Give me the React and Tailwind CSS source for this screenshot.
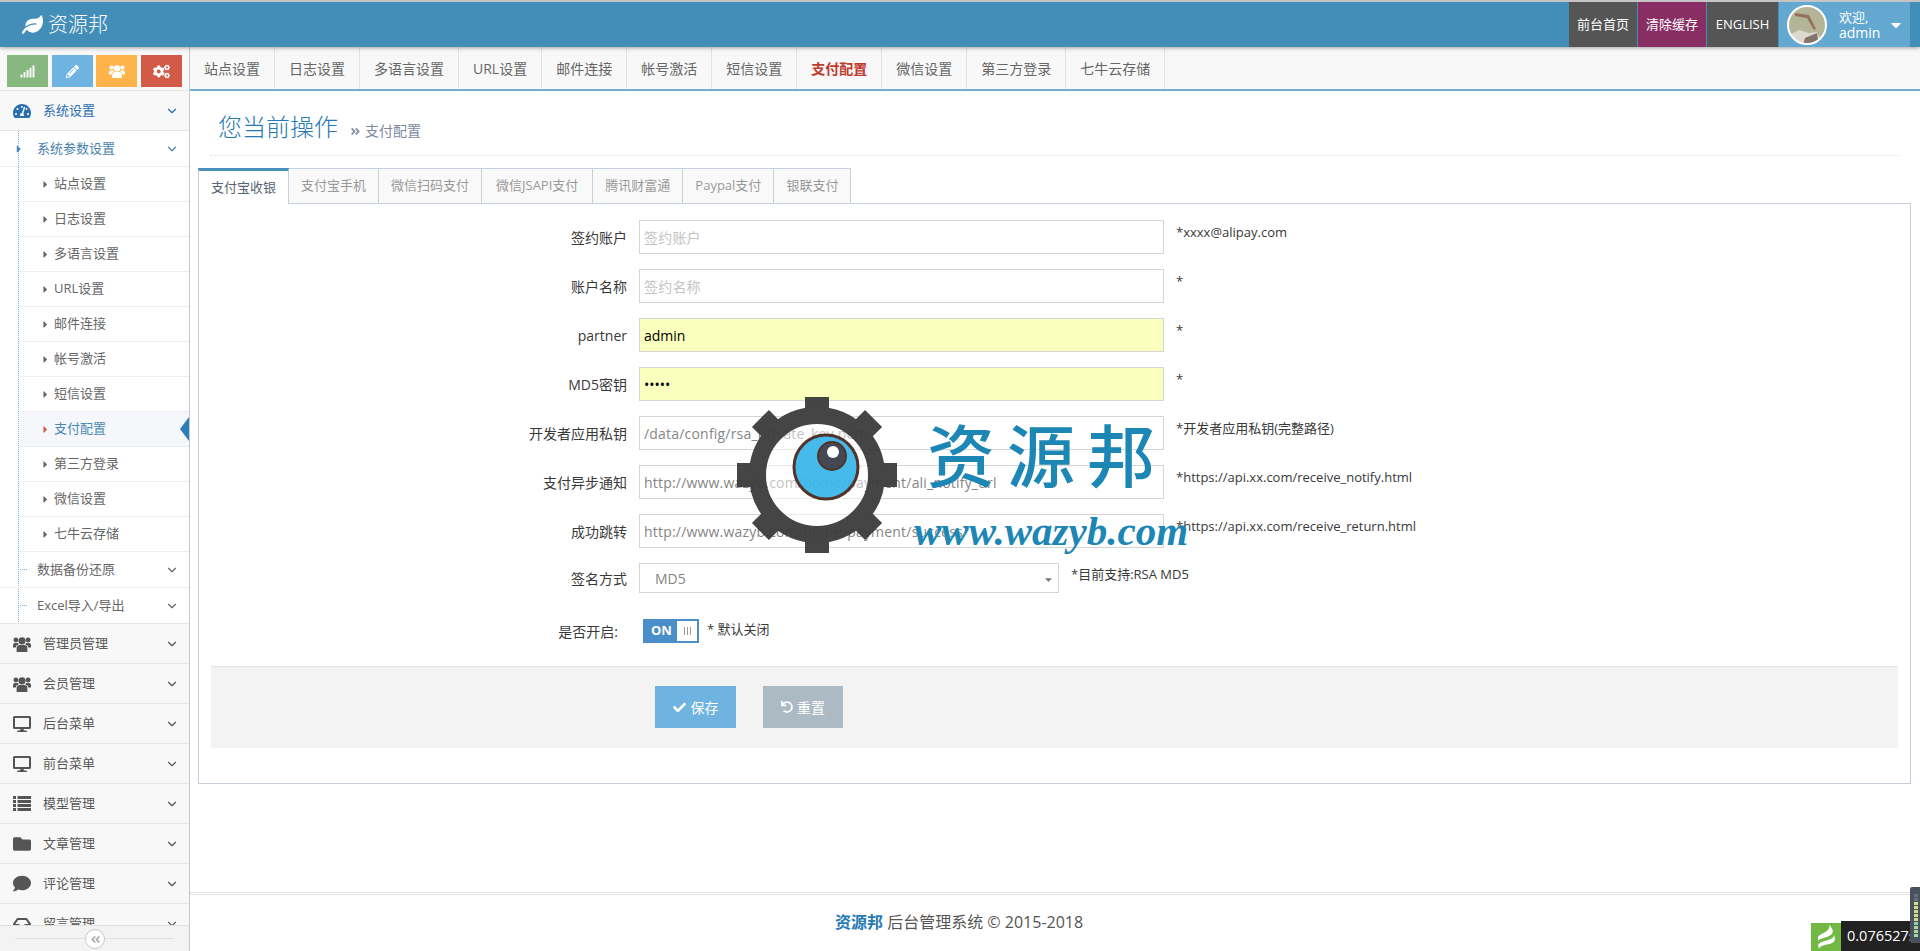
import { ChevronDown } from "lucide-react";
import {
  FaAngleDoubleLeft,
  FaAngleDoubleRight,
  FaCaretDown,
  FaCaretRight,
  FaCheck,
  FaCogs,
  FaComment,
  FaDesktop,
  FaFolder,
  FaInbox,
  FaLeaf,
  FaPencilAlt,
  FaSignal,
  FaTachometerAlt,
  FaUndo,
} from "react-icons/fa";

// font-awesome 4 look, the packaged FaUsers / FaList are too flat
const UsersIcon = ({ size = 20, className }) => (
  <svg width={size} height={(size * 18) / 20} viewBox="0 0 20 18" fill="currentColor" className={className}>
    <circle cx="10" cy="5.5" r="4" />
    <circle cx="3.2" cy="4.5" r="2.7" />
    <circle cx="16.8" cy="4.5" r="2.7" />
    <path d="M4 18 V13.5 Q4 10 7.5 10 H12.5 Q16 10 16 13.5 V18Z" />
    <path d="M0 13 V10 Q0 8 2.5 8 H5.5 Q6 9 6.5 9.3 Q3 10.5 3 13Z" />
    <path d="M20 13 V10 Q20 8 17.5 8 H14.5 Q14 9 13.5 9.3 Q17 10.5 17 13Z" />
  </svg>
);

const ListIcon = ({ className }) => (
  <svg width="18" height="15" viewBox="0 0 18 15" fill="currentColor" className={className}>
    {[0, 4, 8, 12].map((y) => (
      <g key={y}>
        <rect x="0" y={y} width="3" height="3" />
        <rect x="4.5" y={y} width="13.5" height="3" />
      </g>
    ))}
  </svg>
);

const subItems = ["站点设置", "日志设置", "多语言设置", "URL设置", "邮件连接", "帐号激活", "短信设置", "支付配置", "第三方登录", "微信设置", "七牛云存储"];
const menus = [
  ["管理员管理", <UsersIcon />],
  ["会员管理", <UsersIcon />],
  ["后台菜单", <FaDesktop size={20} />],
  ["前台菜单", <FaDesktop size={20} />],
  ["模型管理", <ListIcon />],
  ["文章管理", <FaFolder size={18} />],
  ["评论管理", <FaComment size={19} />],
  ["留言管理", <FaInbox size={18} />],
];
const navTabs = ["站点设置", "日志设置", "多语言设置", "URL设置", "邮件连接", "帐号激活", "短信设置", "支付配置", "微信设置", "第三方登录", "七牛云存储"];
const payTabs = ["支付宝收银", "支付宝手机", "微信扫码支付", "微信JSAPI支付", "腾讯财富通", "Paypal支付", "银联支付"];
const fields = [
  { label: "签约账户", placeholder: "签约账户", hint: "*xxxx@alipay.com" },
  { label: "账户名称", placeholder: "签约名称", hint: "*" },
  { label: "partner", value: "admin", hint: "*", filled: true },
  { label: "MD5密钥", value: "admin", type: "password", hint: "*", filled: true },
  { label: "开发者应用私钥", value: "/data/config/rsa_private_key.pem", hint: "*开发者应用私钥(完整路径)" },
  { label: "支付异步通知", value: "http://www.wazyb.com/home/payment/ali_notify_url", hint: "*https://api.xx.com/receive_notify.html" },
  { label: "成功跳转", value: "http://www.wazyb.com/home/payment/success", hint: "*https://api.xx.com/receive_return.html" },
];

const Header = () => (
  <div className="relative z-10 flex h-[47px] shrink-0 items-stretch justify-between border-t-2 border-[#c4c4c4] bg-[#438eb9] shadow-[0_1px_4px_rgba(0,0,0,0.35)]">
    <div className="flex items-center pl-[22px] text-white">
      <FaLeaf size={21} />
      <span className="ml-[5px] text-[20px] leading-none font-light">资源邦</span>
    </div>
    <div className="flex items-stretch pr-[10px] text-[13px] text-white">
      <div className="flex w-[68px] items-center justify-center bg-[#555]">前台首页</div>
      <div className="ml-px flex w-[68px] items-center justify-center bg-[#892e65]">清除缓存</div>
      <div className="ml-px flex w-[71px] items-center justify-center bg-[#555]">ENGLISH</div>
      <div className="ml-px flex w-[131px] items-center bg-[#62a8d1] pl-[8px]">
        <svg width="40" height="40" viewBox="0 0 40 40" className="shrink-0">
          <defs>
            <clipPath id="face">
              <circle cx="20" cy="20" r="19" />
            </clipPath>
          </defs>
          <g clipPath="url(#face)">
            <rect width="40" height="40" fill="#b4b498" />
            <path d="M8 8 L22 10 L29 24 L27 25 L20 13 L8 11Z" fill="#94705e" />
            <path d="M2 30 L12 25 L22 28 L30 27 L36 40 L4 40Z" fill="#dcd9d0" />
            <path d="M18 33 L30 28 L32 40 L16 40Z" fill="#85746a" />
          </g>
          <circle cx="20" cy="20" r="19" fill="none" stroke="#fff" strokeWidth="2" />
        </svg>
        <div className="ml-[12px] leading-[16px]">
          <div className="text-[13px]">欢迎,</div>
          <div className="text-[14px]">admin</div>
        </div>
        <FaCaretDown size={16} className="ml-[8px]" />
      </div>
    </div>
  </div>
);

const Sidebar = () => (
  <div className="flex w-[190px] shrink-0 flex-col border-r border-[#c8c8c8] bg-[#f8f8f8]">
    <div className="flex h-[44px] shrink-0 gap-[4px] border-b border-[#e5e5e5] pl-[7px] pt-[8px]">
      <div className="flex h-[32px] w-[41px] items-center justify-center bg-[#87b87f] text-white"><FaSignal size={15} /></div>
      <div className="flex h-[32px] w-[41px] items-center justify-center bg-[#6fb3e0] text-white"><FaPencilAlt size={13} /></div>
      <div className="-ml-px flex h-[32px] w-[41px] items-center justify-center bg-[#ffb44b] text-white"><UsersIcon size={16} /></div>
      <div className="flex h-[32px] w-[41px] items-center justify-center bg-[#d15b47] text-white"><FaCogs size={17} /></div>
    </div>
    <div className="min-h-0 flex-1 overflow-hidden">
      <div className="flex h-[40px] items-center border-b border-[#e5e5e5] pl-[13px] pr-[10px] text-[13px] text-[#2b6eb0]">
        <FaTachometerAlt size={20} className="w-[18px]" />
        <span className="ml-[12px] flex-1">系统设置</span>
        <ChevronDown size={14} />
      </div>
      <div className="relative bg-white text-[13px] text-[#666]">
        <div className="absolute bottom-0 left-[18px] top-0 border-l border-dotted border-[#7fb0d6]" />
        <div className="relative flex h-[36px] items-center border-b border-dotted border-[#e0e0e0] pl-[37px] pr-[10px] text-[#4a7fae]">
          <FaCaretRight size={12} className="absolute left-[13px] text-[#4a86c0]" />
          <span className="flex-1">系统参数设置</span>
          <ChevronDown size={14} />
        </div>
        {subItems.map((t) => (
          <div
            key={t}
            className={`relative ml-[20px] flex h-[35px] items-center border-b border-dotted border-[#e0e0e0] pl-[34px] ${t === "支付配置" ? "bg-[#f5f7fa] text-[#4b88b7]" : ""}`}
          >
            <FaCaretRight size={11} className={`absolute left-[20px] ${t === "支付配置" ? "text-[#d15b47]" : "text-[#666]"}`} />
            {t}
            {t === "支付配置" && (
              <svg width="9" height="24" viewBox="0 0 9 24" className="absolute right-0 top-[5px]">
                <path d="M9 0 L0 12 L9 24Z" fill="#2b7dbc" />
              </svg>
            )}
          </div>
        ))}
        {["数据备份还原", "Excel导入/导出"].map((t, i) => (
          <div key={t} className={`relative flex h-[36px] items-center border-b pl-[37px] pr-[10px] ${i === 1 ? "border-solid border-[#e5e5e5]" : "border-dotted border-[#e0e0e0]"}`}>
            <div className="absolute left-[20px] top-[17px] w-[7px] border-t border-dotted border-[#7fb0d6]" />
            <span className="flex-1">{t}</span>
            <ChevronDown size={14} />
          </div>
        ))}
      </div>
      {menus.map(([t, icon]) => (
        <div key={t} className="flex h-[40px] items-center border-b border-[#e5e5e5] pl-[13px] pr-[10px] text-[13px] text-[#585858]">
          <div className="flex w-[18px] justify-center text-[#555]">{icon}</div>
          <span className="ml-[12px] flex-1">{t}</span>
          <ChevronDown size={14} />
        </div>
      ))}
    </div>
    <div className="relative flex h-[26px] shrink-0 items-center justify-center border-t border-[#e0e0e0] bg-[#f3f3f3]">
      <div className="mx-[15px] w-full border-t border-[#e0e0e0]" />
      <div className="absolute left-[85px] top-[3px] flex h-[20px] w-[20px] items-center justify-center rounded-full border border-[#c8c8c8] bg-white text-[#aaa]">
        <FaAngleDoubleLeft size={11} />
      </div>
    </div>
  </div>
);

const Field = ({ label, placeholder, value, hint, type, filled }) => (
  <div className="mb-[15px] flex h-[34px]">
    <div className="w-[428px] pt-[8px] text-right text-[14px] leading-[20px] text-[#393939]">{label}</div>
    <input
      readOnly
      type={type || "text"}
      placeholder={placeholder}
      value={value || ""}
      className={`ml-[12px] h-[34px] w-[525px] border border-[#d5d5d5] px-[4px] text-[14px] outline-none placeholder:text-[#c4c4c4] ${filled ? "bg-[#faffbd] text-black" : "bg-white tracking-[0.2px] text-[#858585]"}`}
    />
    <div className="ml-[12px] pt-[2px] text-[13px] leading-[20px] text-[#393939]">{hint}</div>
  </div>
);

const gearTeeth = [0, 45, 90, 135, 180, 225, 270, 315];

const Watermark = () => (
  <div className="pointer-events-none absolute left-[737px] top-[397px] z-20 h-[160px] w-[460px]">
    <svg width="160" height="156" viewBox="0 0 160 156" className="absolute left-0 top-0 opacity-95">
      {gearTeeth.map((a) => (
        <rect key={a} x="68" y="-2" width="24" height="24" fill="#3c3c3c" transform={`rotate(${a} 80 78)`} />
      ))}
      <circle cx="80" cy="78" r="51" fill="#fff" fillOpacity="0.55" />
      <circle cx="80" cy="78" r="59.5" fill="none" stroke="#3c3c3c" strokeWidth="17" />
      <circle cx="89" cy="70" r="32" fill="#3db7ea" stroke="#4a2a20" strokeWidth="3" />
      <circle cx="95" cy="59" r="14" fill="#3a3f4a" stroke="#4a2a20" strokeWidth="2" />
      <circle cx="96" cy="55" r="6" fill="#fff" />
    </svg>
    <div className="absolute left-[190px] top-[14px] flex gap-[12px] font-['Noto_Sans_CJK_SC',sans-serif] text-[68px] font-medium leading-[84px] text-[#1c86b4]">
      <span>资</span>
      <span>源</span>
      <span>邦</span>
    </div>
    <div className="absolute left-[177px] top-[106px] font-['Liberation_Serif',serif] text-[41px] font-bold italic leading-[56px] text-[#1c86b4]">www.wazyb.com</div>
  </div>
);

export default function App() {
  return (
    <div className="relative flex h-[951px] w-[1920px] flex-col overflow-hidden bg-white font-['Open_Sans','Noto_Sans_CJK_SC',sans-serif]">
      <Header />
      <div className="flex min-h-0 flex-1">
        <Sidebar />
        <div className="flex min-w-0 flex-1 flex-col">
          <div className="flex h-[44px] shrink-0 border-b-2 border-[#76aecb] bg-[#f8f8f8] text-[14px] text-[#666]">
            {navTabs.map((t) => (
              <div key={t} className={`flex items-center justify-center border-r border-[#e2e2e2] px-[14px] ${t === "支付配置" ? "font-bold text-[#c0392b]" : ""}`}>
                {t}
              </div>
            ))}
          </div>
          <div className="mx-[20px] mt-[17px] flex h-[48px] items-end border-b border-dotted border-[#e2e2e2] pb-[12px] pl-[8px]">
            <span className="text-[24px] font-light leading-[32px] text-[#2679b5]">您当前操作</span>
            <span className="ml-[12px] flex items-center text-[14px] leading-[24px] text-[#8089a0]">
              <FaAngleDoubleRight size={11} className="mr-[4px]" />
              支付配置
            </span>
          </div>
          <div className="ml-[8px] mr-[9px] mt-[12px]">
            <div className="flex h-[36px] text-[13px] text-[#999]">
              {payTabs.map((t, i) => (
                <div
                  key={t}
                  className={
                    i === 0
                      ? "relative z-10 flex h-[36px] w-[91px] items-center justify-center border-x border-t-[3px] border-x-[#c5d0dc] border-t-[#4c8fbd] bg-white text-[#576373]"
                      : `flex h-[36px] items-center justify-center border-y border-r border-[#c5d0dc] bg-[#f9f9f9] ${t === "微信JSAPI支付" ? "px-[14px]" : "px-[12px]"}`
                  }
                >
                  {t}
                </div>
              ))}
            </div>
            <div className="-mt-px h-[581px] border border-[#c5d0dc] pt-[16px]">
              {fields.map((f) => (
                <Field key={f.label} {...f} />
              ))}
              <div className="flex h-[30px]">
                <div className="w-[428px] pt-[6px] text-right text-[14px] leading-[20px] text-[#393939]">签名方式</div>
                <div className="relative ml-[12px] h-[30px] w-[420px]">
                  <select className="h-[30px] w-full appearance-none rounded-none border border-[#d5d5d5] bg-white pl-[15px] text-[14px] text-[#858585] outline-none">
                    <option>MD5</option>
                  </select>
                  <FaCaretDown size={11} className="absolute right-[5px] top-[11px] text-[#777]" />
                </div>
                <div className="ml-[12px] pt-px text-[13px] leading-[20px] text-[#393939]">*目前支持:RSA MD5</div>
              </div>
              <div className="mt-[26px] flex h-[24px]">
                <div className="w-[419px] pt-[3px] text-right text-[14px] leading-[20px] text-[#393939]">是否开启:</div>
                <div className="ml-[25px] flex h-[24px] w-[56px] items-center bg-[#4a8fca] pl-[8px] text-[13px] font-bold text-white">
                  <span className="w-[26px]">ON</span>
                  <span className="flex h-[20px] w-[20px] items-center justify-center gap-[2px] bg-white">
                    <i className="h-[8px] w-px bg-[#999]" />
                    <i className="h-[8px] w-px bg-[#999]" />
                    <i className="h-[8px] w-px bg-[#999]" />
                  </span>
                </div>
                <div className="ml-[8px] text-[13px] leading-[20px] text-[#393939]">* 默认关闭</div>
              </div>
              <div className="mx-[12px] mt-[23px] flex h-[82px] items-start border-t border-[#e5e5e5] bg-[#f3f3f3] pl-[444px] pt-[19px] text-[14px] text-white">
                <div className="flex h-[42px] w-[81px] items-center justify-center gap-[5px] bg-[#6fb3e0]">
                  <FaCheck size={13} />
                  保存
                </div>
                <div className="ml-[27px] flex h-[42px] w-[80px] items-center justify-center gap-[4px] bg-[#abbac3]">
                  <FaUndo size={12} />
                  重置
                </div>
              </div>
            </div>
          </div>
          <div className="mt-[108px] h-[59px] border-t-[3px] border-double border-[#e2e2e2] pl-[645px] pt-[15px] text-[16px] leading-[24px] text-[#555]">
            <span className="font-bold text-[#2679b5]">资源邦</span> 后台管理系统 © 2015-2018
          </div>
        </div>
      </div>
      <Watermark />
      <div className="absolute bottom-0 left-[1811px] flex h-[28px] w-[30px] items-center justify-center bg-[#72b844]">
        <svg width="22" height="26" viewBox="0 0 22 26">
          <path d="M3 14 C3 9 16 9 14 1 C19 5 19 10 14 12 C10 14 5 14 3 17Z" fill="#fff" />
          <path d="M3 21 C5 16 19 17 19 11 C21 15 20 19 14 20 C9 21 5 22 4 25Z" fill="#fff" />
        </svg>
      </div>
      <div className="absolute bottom-0 left-[1841px] h-[30px] w-[79px] overflow-hidden whitespace-nowrap bg-[#222] pl-[6px] text-[14.5px] leading-[30px] text-white">0.076527s</div>
      <div className="absolute left-[1910px] top-[887px] flex h-[56px] w-[10px] flex-col justify-end gap-px rounded-l-[2px] bg-[#48525c] pb-[6px] pl-[4px]">
        {["#66707a", "#66707a", "#d6dc8a", "#d6dc8a", "#d6dc8a", "#d6dc8a", "#d6dc8a", "#8ecfa0", "#a8d7a0", "#a8d7a0", "#a8d7a0"].map((c, i) => (
          <div key={i} className="h-[3px] w-[4px]" style={{ backgroundColor: c }} />
        ))}
      </div>
    </div>
  );
}
